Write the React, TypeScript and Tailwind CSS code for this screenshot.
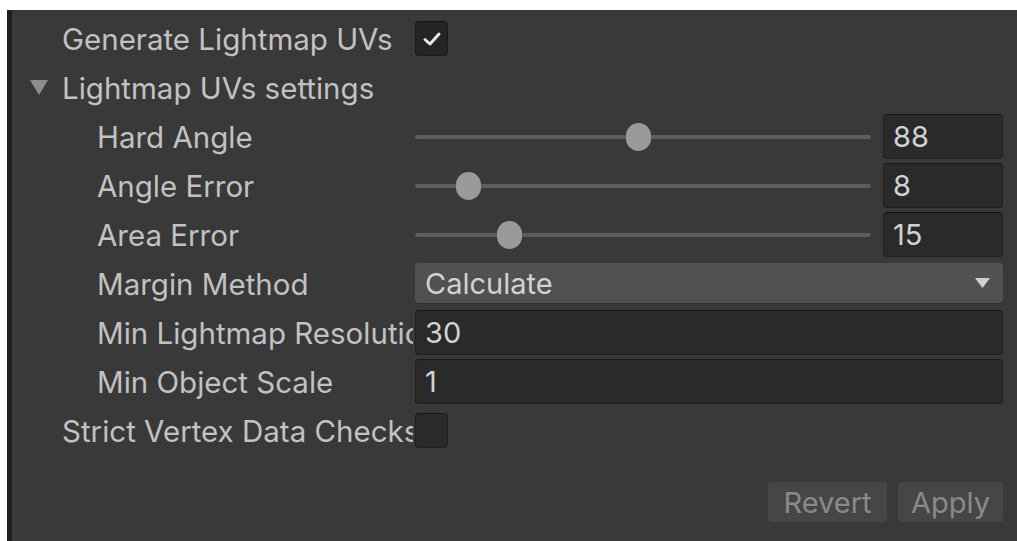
import React from "react";

const font = { fontFamily: "Inter, 'Noto Sans', sans-serif" };

function Label({ text, indent }: { text: string; indent?: boolean }) {
  return (
    <div
      className={`w-[351px] mr-[2px] shrink-0 overflow-hidden whitespace-nowrap text-[29.5px] leading-[38px] text-[#c2c2c2] ${indent ? "pl-[35px]" : ""}`}
    >
      {text}
    </div>
  );
}

function Checkbox({ checked }: { checked?: boolean }) {
  return (
    <div className="w-[33px] h-[35px] rounded-[4px] bg-[#242424] border border-[#1a1a1a] border-t-[#151515] flex items-center justify-center">
      {checked && (
        <svg width="20" height="16" viewBox="0 0 20 16">
          <polyline points="3,8.5 8,13 17,3" fill="none" stroke="#e8e8e8" strokeWidth="3" strokeLinecap="round" strokeLinejoin="round" />
        </svg>
      )}
    </div>
  );
}

function Field({ value, className = "" }: { value: string; className?: string }) {
  return (
    <div
      className={`h-[45px] rounded-[4px] bg-[#2a2a2a] border border-[#212121] border-t-[#151515] flex items-center pl-[9px] text-[29px] leading-none text-[#d2d2d2] ${className}`}
    >
      {value}
    </div>
  );
}

function SliderRow({ label, value, min, max }: { label: string; value: number; min: number; max: number }) {
  const frac = (value - min) / (max - min);
  return (
    <div className="h-[49px] flex items-center">
      <Label text={label} indent />
      <div className="flex-1 relative h-[30px] flex items-center">
        <div className="w-full h-[4px] rounded-full bg-[#5e5e5e]" />
        <div
          className="absolute top-[1px] w-[25px] h-[28px] rounded-full bg-[#9a9a9a]"
          style={{ left: `calc(${frac} * (100% - 25px))` }}
        />
      </div>
      <Field value={String(value)} className="w-[120px] ml-[12px]" />
    </div>
  );
}

export default function App() {
  return (
    <div className="w-[1017px] h-[541px] bg-white pt-[10px] pl-[7px] overflow-hidden" style={font}>
      <div className="flex h-full">
        <div className="w-[5px] bg-[#1f1f1f]" />
        <div className="flex-1 bg-[#393939] pt-[4px] pl-[50px] pr-[14px] flex flex-col">
          <div className="h-[49px] flex items-center">
            <Label text="Generate Lightmap UVs" />
            <Checkbox checked />
          </div>
          <div className="h-[49px] flex items-center relative">
            <svg className="absolute left-[-32px] top-[16px]" width="18" height="17" viewBox="0 0 18 17">
              <polygon points="0,1 18,1 9,16" fill="#8c8c8c" />
            </svg>
            <div className="text-[29.5px] leading-[38px] text-[#c2c2c2] whitespace-nowrap">Lightmap UVs settings</div>
          </div>
          <SliderRow label="Hard Angle" value={88} min={0} max={180} />
          <SliderRow label="Angle Error" value={8} min={1} max={75} />
          <SliderRow label="Area Error" value={15} min={1} max={75} />
          <div className="h-[49px] flex items-center">
            <Label text="Margin Method" indent />
            <div className="flex-1 h-[41px] rounded-[4px] bg-[#515151] border-b border-[#2e2e2e] flex items-center justify-between pl-[10px] pr-[13px] text-[29px] leading-none text-[#d2d2d2]">
              <span>Calculate</span>
              <svg width="15" height="10" viewBox="0 0 15 10">
                <polygon points="0,0 15,0 7.5,10" fill="#d0d0d0" />
              </svg>
            </div>
          </div>
          <div className="h-[49px] flex items-center">
            <Label text="Min Lightmap Resolution" indent />
            <Field value="30" className="flex-1" />
          </div>
          <div className="h-[49px] flex items-center">
            <Label text="Min Object Scale" indent />
            <Field value="1" className="flex-1" />
          </div>
          <div className="h-[49px] flex items-center">
            <Label text="Strict Vertex Data Checks" />
            <div className="w-[33px] h-[35px] rounded-[4px] bg-[#2a2a2a] border border-[#1e1e1e] border-t-[#171717]" />
          </div>
          <div className="flex justify-end gap-[11px] mt-[27px]">
            <div className="w-[119px] h-[40px] rounded-[4px] bg-[#464646] flex items-center justify-center text-[29px] leading-none text-[#8a8a8a]">
              Revert
            </div>
            <div className="w-[105px] h-[40px] rounded-[4px] bg-[#464646] flex items-center justify-center text-[29px] leading-none text-[#8a8a8a]">
              Apply
            </div>
          </div>
        </div>
      </div>
    </div>
  );
}
